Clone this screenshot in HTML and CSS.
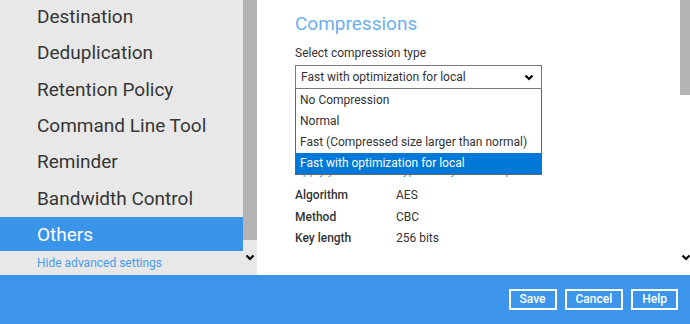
FILE: index.html
```html
<!DOCTYPE html>
<html lang="en">
<head>
    <meta charset="UTF-8">
    <meta name="viewport" content="width=device-width, initial-scale=1.0">
    <title>Backup Set Settings</title>
    <link rel="stylesheet" href="styles.css">
</head>
<body>
    <div class="app">
        <div class="workspace">
            <aside class="sidebar">
                <div class="sidebar-main">
                    <div class="nav-wrap">
                        <ul class="nav">
                            <li>Destination</li>
                            <li>Deduplication</li>
                            <li>Retention Policy</li>
                            <li>Command Line Tool</li>
                            <li>Reminder</li>
                            <li>Bandwidth Control</li>
                            <li class="active">Others</li>
                        </ul>
                    </div>
                    <a class="hide-link" href="#">Hide advanced settings</a>
                </div>
                <div class="side-scroll">
                    <div class="side-thumb"></div>
                    <svg class="chev" width="10" height="7" viewBox="0 0 10 7"><path d="M1.5 1.5 L5 5 L8.5 1.5" fill="none" stroke="#000" stroke-width="2.2"/></svg>
                </div>
            </aside>

            <main class="content">
                <div class="panel">
                    <h2>Compressions</h2>
                    <div class="field-label">Select compression type</div>
                    <div class="select-wrap">
                        <div class="select">
                            <span>Fast with optimization for local</span>
                            <svg width="10" height="7" viewBox="0 0 10 7"><path d="M1.5 1.5 L5 5 L8.5 1.5" fill="none" stroke="#000" stroke-width="2.2"/></svg>
                        </div>
                        <ul class="dropdown">
                            <li>No Compression</li>
                            <li>Normal</li>
                            <li>Fast (Compressed size larger than normal)</li>
                            <li class="selected">Fast with optimization for local</li>
                        </ul>
                    </div>
                    <div class="hint">Apply your own encryption key to backup</div>
                    <table class="info">
                        <tr><th>Algorithm</th><td>AES</td></tr>
                        <tr><th>Method</th><td>CBC</td></tr>
                        <tr><th>Key length</th><td>256 bits</td></tr>
                    </table>
                </div>
                <div class="main-scroll">
                    <div class="main-thumb"></div>
                    <svg class="chev" width="10" height="7" viewBox="0 0 10 7"><path d="M1.5 1.5 L5 5 L8.5 1.5" fill="none" stroke="#000" stroke-width="2.2"/></svg>
                </div>
            </main>
        </div>

        <footer class="toolbar">
            <button type="button">Save</button>
            <button type="button">Cancel</button>
            <button type="button">Help</button>
        </footer>
    </div>
</body>
</html>
```

FILE: styles.css
```css
body {
    margin: 0;
    font-family: "Segoe UI", Roboto, "Noto Sans", sans-serif;
    color: #333;
    background: #fff;
}
.app {
    width: 690px;
    height: 324px;
    display: flex;
    flex-direction: column;
    overflow: hidden;
}
.workspace {
    height: 275px;
    display: flex;
}

/* left navigation */
.sidebar {
    width: 257px;
    display: flex;
    background: #e8e8e8;
}
.sidebar-main {
    width: 243px;
    display: flex;
    flex-direction: column;
}
.nav-wrap {
    height: 251px;
    overflow: hidden;
}
.nav {
    list-style: none;
    margin: -1px 0 0;
    padding: 0;
}
.nav li {
    height: 36.33px;
    line-height: 36.33px;
    padding-left: 37px;
    font-size: 19px;
    color: #363636;
}
.nav li.active {
    background: #3a94ea;
    color: #fff;
}
.hide-link {
    display: block;
    padding-left: 37px;
    line-height: 24px;
    font-size: 12px;
    color: #4a9be8;
    text-decoration: none;
}
.side-scroll {
    width: 14px;
    display: flex;
    flex-direction: column;
    align-items: center;
}
.side-thumb {
    width: 14px;
    height: 240px;
    background: #b3b3b3;
}
.side-scroll .chev {
    margin-top: 14px;
}

/* main panel */
.content {
    flex: 1;
    display: flex;
    background: #fff;
}
.panel {
    flex: 1;
    padding: 11px 0 0 38px;
}
h2 {
    margin: 0;
    font-size: 19px;
    line-height: 26px;
    font-weight: 400;
    color: #6cb0f0;
}
.field-label {
    margin-top: 7px;
    font-size: 12px;
    line-height: 18px;
}
.select-wrap {
    position: relative;
    width: 247px;
    margin-top: 3px;
}
.select {
    height: 24px;
    box-sizing: border-box;
    border: 1px solid #7a7a7a;
    display: flex;
    align-items: center;
    justify-content: space-between;
    padding: 0 7px 0 5px;
    font-size: 12px;
}
.dropdown {
    position: absolute;
    top: 24px;
    left: 0;
    width: 247px;
    box-sizing: border-box;
    margin: 0;
    padding: 0;
    list-style: none;
    background: #fff;
    border: 1px solid #646464;
    border-top: 0;
    z-index: 2;
}
.dropdown li {
    height: 21px;
    line-height: 21px;
    padding-left: 4px;
    font-size: 12px;
}
.dropdown li:first-child {
    margin-top: 1px;
}
.dropdown li.selected {
    background: #0078d7;
    color: #fff;
}
.hint {
    margin-top: 72px;
    font-size: 12px;
    line-height: 18px;
    color: #4a9be8;
    white-space: nowrap;
}
.info {
    margin-top: 6px;
    border-collapse: collapse;
    font-size: 12px;
}
.info th {
    width: 101px;
    padding: 0;
    text-align: left;
    font-weight: 500;
    line-height: 21.5px;
}
.info td {
    padding: 0;
    line-height: 21.5px;
}
.main-scroll {
    width: 10px;
    display: flex;
    flex-direction: column;
    align-items: center;
}
.main-thumb {
    width: 10px;
    height: 95px;
    background: #b3b3b3;
}
.main-scroll .chev {
    margin-top: 159px;
    margin-left: 2px;
}

/* bottom toolbar */
.toolbar {
    flex: 1;
    background: #3c95ea;
    display: flex;
    justify-content: flex-end;
    align-items: center;
    gap: 8px;
    padding-right: 12px;
}
.toolbar button {
    height: 21px;
    box-sizing: border-box;
    background: transparent;
    border: 2px solid #fff;
    color: #fff;
    font-family: "Segoe UI", Roboto, "Noto Sans", sans-serif;
    font-size: 12px;
    font-weight: 500;
    padding: 0 9px;
    line-height: 17px;
}
```
